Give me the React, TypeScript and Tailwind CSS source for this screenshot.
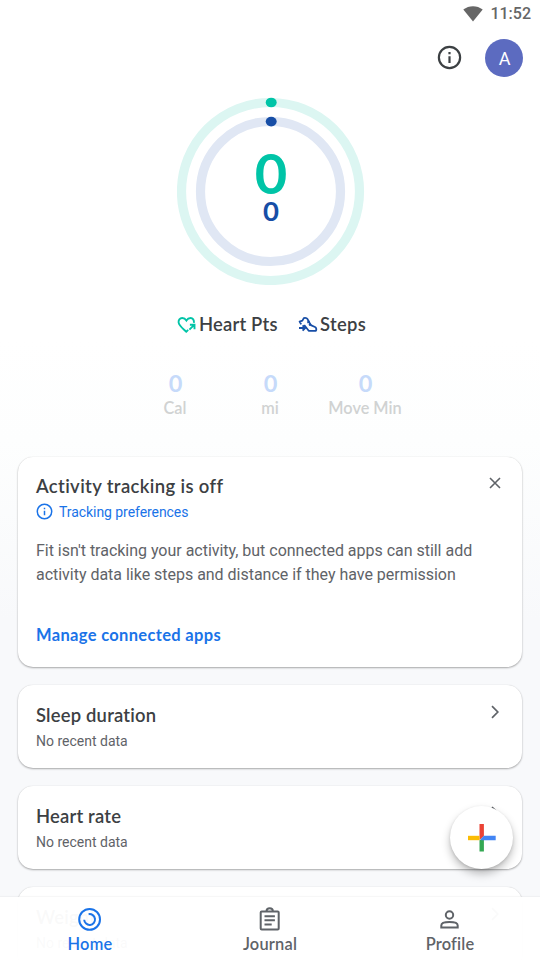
import type { ReactNode } from "react";

const display = "font-[Lato,'Noto_Sans',sans-serif] [font-variant-ligatures:none]";
const body = "font-[Roboto,sans-serif]";

function InfoIcon({ className }: { className: string }) {
  return (
    <svg viewBox="0 0 24 24" className={className} fill="none" stroke="currentColor" strokeWidth="2.1">
      <circle cx="12" cy="12" r="10.2" />
      <path d="M12 10.8v6.4M12 6.7v2.2" />
    </svg>
  );
}

function Rings() {
  return (
    <svg viewBox="0 0 188 188" className="col-start-1 row-start-1 h-[188px] w-[188px]" fill="none">
      <circle cx="93.5" cy="94.5" r="89" stroke="#dcf6f2" strokeWidth="9.2" />
      <circle cx="93.5" cy="94.5" r="70" stroke="#e0e7f4" strokeWidth="9.2" />
      <ellipse cx="94.2" cy="5.5" rx="5.5" ry="4.8" fill="#00c4a7" />
      <ellipse cx="94.2" cy="24.6" rx="5.5" ry="4.8" fill="#174ea6" />
    </svg>
  );
}

function HeartIcon() {
  return (
    <svg viewBox="0 0 20 18" className="h-[18px] w-5" fill="none" stroke="#00c4a7" strokeWidth="1.9">
      <path d="M16.9 6.8C17.3 4 15.8 2 13.6 2 11.8 2 10.3 3 9.4 4.4 8.5 3 7 2 5.2 2 2.8 2 1.3 4 1.6 6.5 2 9.7 5.5 12.2 9.3 15.7l1.9-1.8" />
      <path d="M12.4 13.6l4.8-4.8M12.9 8.7h4.6v4.6" />
    </svg>
  );
}

function ShoeIcon() {
  return (
    <svg viewBox="0 0 20 18" className="h-[18px] w-5" fill="none" stroke="#174ea6" strokeWidth="1.8" strokeLinejoin="round">
      <path d="M3.2 8.4L1.6 5.6 4.4 4.6 5.8 2.1c2.1-.6 4 .3 4.4 2.4l2.6 4.6 4.2 1.9c1.3.6 1.7 2.4.9 3.8h-7.2L6.2 9" />
      <path d="M9.3 6.6l2.3-1.2M10.9 9.2l2.3-1.2M1 12h5.8M4.6 9.4L7.2 12l-2.6 2.6" />
    </svg>
  );
}

function Metric({ label, className }: { label: string; className: string }) {
  return (
    <div className={`flex flex-col items-center ${display} ${className}`}>
      <span className="ml-px text-[23.5px] leading-[26px] font-bold text-[#c6dafa]">0</span>
      <span className="text-[16.3px] leading-[23px] font-semibold whitespace-nowrap text-[#d0d2d2]">{label}</span>
    </div>
  );
}

function Card({ children, className }: { children: ReactNode; className: string }) {
  return (
    <section className={`mx-[18px] shrink-0 rounded-[15px] bg-white px-[18px] shadow-[0_1px_2px_rgba(0,0,0,0.32),0_0_1px_rgba(0,0,0,0.12)] ${className}`}>
      {children}
    </section>
  );
}

function Chevron() {
  return (
    <svg viewBox="0 0 10 14" className="mt-[20px] mr-[22px] h-[14px] w-[10px] text-[#5f6368]" fill="none" stroke="currentColor" strokeWidth="1.7">
      <path d="M2 1.2L7.8 7 2 12.8" />
    </svg>
  );
}

function DataCard({ title }: { title: string }) {
  return (
    <Card className="mt-[18px] flex h-[83px] justify-between !pr-0">
      <div className="pt-[17px]">
        <h2 className={`${display} text-[18.4px] leading-[26px] font-semibold tracking-[0.2px] text-[#3c4043]`}>{title}</h2>
        <p className={`${body} text-[14px] leading-[26px] text-[#5f6368]`}>No recent data</p>
      </div>
      <Chevron />
    </Card>
  );
}

function Tab({ label, active, children }: { label: string; active?: boolean; children: ReactNode }) {
  return (
    <button className={`flex w-[180px] flex-col items-center pt-[10px] ${active ? "text-[#1a73e8]" : "text-[#5f6368]"}`}>
      <svg viewBox="0 0 24 24" className="h-6 w-6" fill="none" stroke="currentColor" strokeWidth="2">
        {children}
      </svg>
      <span className={`${display} text-[16.4px] leading-[26px] font-semibold tracking-[0.2px]`}>{label}</span>
    </button>
  );
}

export default function App() {
  return (
    <div className="relative flex h-[960px] w-[540px] flex-col overflow-hidden bg-[linear-gradient(#fff_340px,#fdfefe_440px,#f8f9fb_620px)]">
      <div className="flex h-[27px] shrink-0 items-center justify-end gap-[8px] pr-[9px] text-[#666]">
        <svg viewBox="0 0 20 16" className="h-4 w-5 translate-x-px" fill="currentColor">
          <path d="M.3 3.5C6-1 14-1 19.7 3.5L10 15.6z" />
        </svg>
        <span className={`${body} text-[16px] leading-[27px] font-medium`}>11:52</span>
      </div>

      <header className="flex h-[61px] shrink-0 items-center justify-end gap-[23px] pr-[17px]">
        <InfoIcon className="h-[25px] w-[25px] text-[#3c4043]" />
        <div className={`flex h-[38px] w-[38px] items-center justify-center rounded-full bg-[#5c6bc0] pt-px pl-px text-[18px] text-white ${body}`}>A</div>
      </header>

      <div className="mt-[9px] ml-[177px] grid h-[188px] w-[188px] shrink-0">
        <Rings />
        <div className={`col-start-1 row-start-1 flex flex-col items-center pt-[49px] ${display}`}>
          <span className="text-[56px] leading-[54px] font-bold text-[#00c4a7]">0</span>
          <span className="-mt-[2px] text-[27.5px] leading-[26px] font-bold text-[#174ea6]">0</span>
        </div>
      </div>

      <div className={`mt-[26px] flex h-[27px] shrink-0 items-center pl-[177px] text-[18.4px] font-semibold tracking-[0.2px] text-[#3c4043] ${display}`}>
        <div className="flex w-[121px] items-center gap-[2px]">
          <HeartIcon />
          <span>Heart Pts</span>
        </div>
        <div className="flex items-center gap-[2px] tracking-[0.35px]">
          <ShoeIcon />
          <span>Steps</span>
        </div>
      </div>

      <div className="mt-[32px] flex h-[50px] shrink-0 justify-center">
        <Metric label="Cal" className="w-[95px]" />
        <Metric label="mi" className="w-[95px]" />
        <Metric label="Move Min" className="w-[95px]" />
      </div>

      <Card className="mt-[37px] h-[210px] pt-[16px]">
        <div className="flex items-start justify-between">
          <h2 className={`${display} text-[18.5px] leading-[26px] font-semibold tracking-[0.36px] text-[#3c4043]`}>Activity tracking is off</h2>
          <svg viewBox="0 0 12 12" className="mt-[4px] mr-[3px] h-3 w-3" stroke="#5f6368" strokeWidth="1.6">
            <path d="M1 1l10 10M11 1L1 11" />
          </svg>
        </div>
        <div className="flex h-[26px] items-center gap-[6px] text-[#1a73e8]">
          <InfoIcon className="mb-[2px] h-[17px] w-[17px]" />
          <span className={`${body} text-[14px] tracking-[-0.06px]`}>Tracking preferences</span>
        </div>
        <p className={`${body} mt-[14px] text-[16px] leading-[24px] tracking-[-0.02px] whitespace-nowrap text-[#5f6368]`}>
          Fit isn't tracking your activity, but connected apps can still add
          <br />
          activity data like steps and distance if they have permission
        </p>
        <button className={`${display} mt-[35px] block text-[16.5px] leading-[26px] font-bold tracking-[0.33px] text-[#1a73e8]`}>Manage connected apps</button>
      </Card>

      <DataCard title="Sleep duration" />
      <DataCard title="Heart rate" />
      <DataCard title="Weight" />

      <button className="absolute top-[806px] left-[450px] flex h-[63px] w-[63px] items-center justify-center rounded-full bg-white shadow-[0_5px_9px_rgba(0,0,0,0.25),0_1px_3px_rgba(0,0,0,0.12)]">
        <svg viewBox="0 0 28 28" className="h-7 w-7">
          <path fill="#ea4335" d="M11.5 0h4.4v12l-4.4 4z" />
          <path fill="#fbbc04" d="M0 11.8h11.5v4.4H0z" />
          <path fill="#34a853" d="M11.5 16.2l4.4-2.4V27.6h-4.4z" />
          <path fill="#4285f4" d="M15.9 11.8h11.8v4.4H13.3l-.8-1z" />
        </svg>
      </button>

      <nav className="absolute inset-x-0 bottom-0 flex h-[63px] bg-white/97 shadow-[0_-1px_1px_rgba(0,0,0,0.03)]">
        <Tab label="Home" active>
          <circle cx="11.6" cy="12.4" r="10.4" />
          <path d="M10.6 7.2A5.4 5.4 0 1 1 6.2 12.8" />
        </Tab>
        <Tab label="Journal">
          <rect x="2.7" y="4.4" width="18" height="18.2" rx="1" />
          <path d="M6.5 9.3h10.4M6.5 13.3h10.4M6.5 17.5h7.2" />
          <path d="M8.6 3.9a3.1 2.7 0 0 1 6.2 0" />
        </Tab>
        <Tab label="Profile">
          <circle cx="11.5" cy="8" r="3.7" />
          <path d="M3.3 20.5v-2.1c0-2.4 4.6-3.4 8.2-3.4s8.2 1 8.2 3.4v2.1z" />
        </Tab>
      </nav>
    </div>
  );
}
